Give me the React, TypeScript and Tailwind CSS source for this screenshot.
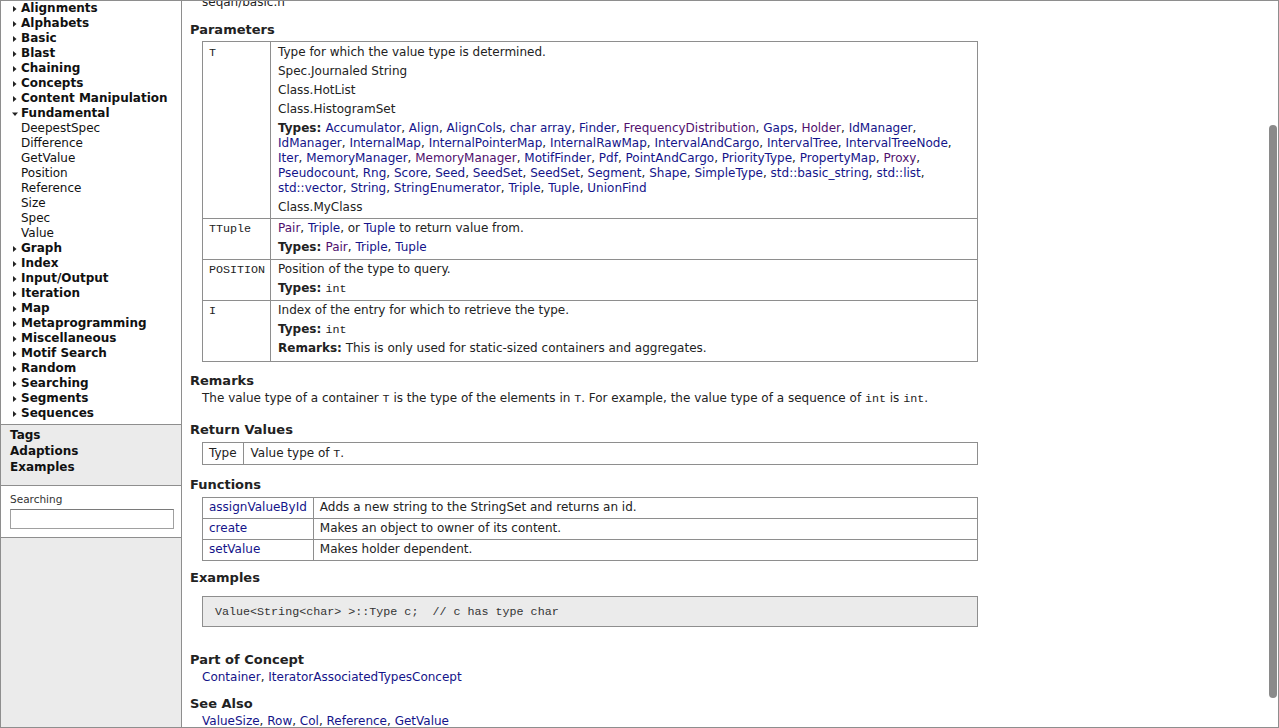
import React from 'react';

const sans = { fontFamily: '"DejaVu Sans", Verdana, sans-serif' };

type Node = { label: string; open?: boolean; children?: string[] };

const tree: Node[] = [
  { label: 'Alignments' },
  { label: 'Alphabets' },
  { label: 'Basic' },
  { label: 'Blast' },
  { label: 'Chaining' },
  { label: 'Concepts' },
  { label: 'Content Manipulation' },
  {
    label: 'Fundamental',
    open: true,
    children: ['DeepestSpec', 'Difference', 'GetValue', 'Position', 'Reference', 'Size', 'Spec', 'Value'],
  },
  { label: 'Graph' },
  { label: 'Index' },
  { label: 'Input/Output' },
  { label: 'Iteration' },
  { label: 'Map' },
  { label: 'Metaprogramming' },
  { label: 'Miscellaneous' },
  { label: 'Motif Search' },
  { label: 'Random' },
  { label: 'Searching' },
  { label: 'Segments' },
  { label: 'Sequences' },
];

// visited links render purple
const typeLines: [string, boolean?][][] = [
  [['Accumulator'], ['Align'], ['AlignCols'], ['char array'], ['Finder'], ['FrequencyDistribution', true], ['Gaps'], ['Holder', true], ['IdManager']],
  [['IdManager'], ['InternalMap'], ['InternalPointerMap'], ['InternalRawMap'], ['IntervalAndCargo'], ['IntervalTree'], ['IntervalTreeNode']],
  [['Iter'], ['MemoryManager'], ['MemoryManager', true], ['MotifFinder'], ['Pdf'], ['PointAndCargo'], ['PriorityType'], ['PropertyMap'], ['Proxy', true]],
  [['Pseudocount'], ['Rng'], ['Score'], ['Seed'], ['SeedSet'], ['SeedSet'], ['Segment'], ['Shape'], ['SimpleType'], ['std::basic_string'], ['std::list']],
  [['std::vector'], ['String'], ['StringEnumerator'], ['Triple'], ['Tuple'], ['UnionFind']],
];

function A({ children, visited }: { children: React.ReactNode; visited?: boolean }) {
  return <span className={visited ? 'text-[#50106e]' : 'text-[#14148a]'}>{children}</span>;
}

function Mono({ children }: { children: React.ReactNode }) {
  return (
    <span className="text-[11.7px] leading-none" style={{ fontFamily: '"Liberation Mono", "Courier New", monospace' }}>
      {children}
    </span>
  );
}

function Tri({ open }: { open?: boolean }) {
  if (open) {
    return (
      <svg width="8" height="6" viewBox="0 0 8 6" className="mr-[2px]">
        <path d="M1 1.5 L7 1.5 L4 5 Z" fill="#222" />
      </svg>
    );
  }
  return (
    <svg width="8" height="8" viewBox="0 0 8 8" className="mr-[2px]">
      <path d="M2 1 L5.5 4 L2 7 Z" fill="#222" />
    </svg>
  );
}

function Heading({ children, className = '' }: { children: React.ReactNode; className?: string }) {
  return <div className={`text-[13px] leading-[16px] font-bold text-[#222] ${className}`}>{children}</div>;
}

function Sidebar() {
  return (
    <div className="w-[181px] shrink-0 border-r border-[#8e8e8e] flex flex-col bg-[#ebebeb]">
      <div className="bg-white pb-[3px] border-b border-[#8e8e8e]">
        <div className="pl-[10px] text-[12px] leading-[15px] text-[#111]">
          {tree.map((n) => (
            <div key={n.label}>
              <div className="flex items-center font-bold">
                <Tri open={n.open} />
                <span>{n.label}</span>
              </div>
              {n.children?.map((c) => (
                <div key={c} className="pl-[10px]">
                  {c}
                </div>
              ))}
            </div>
          ))}
        </div>
      </div>
      <div className="pl-[9px] pt-[2px] pb-[10px] text-[12px] leading-[16px] font-bold text-[#111] border-b border-[#8e8e8e]">
        <div>Tags</div>
        <div>Adaptions</div>
        <div>Examples</div>
      </div>
      <div className="bg-white pl-[9px] pr-[8px] pt-[6px] pb-[8px] border-b border-[#8e8e8e]">
        <div className="text-[10.5px] leading-[14px] text-[#333]">Searching</div>
        <div className="mt-[3px] h-[20px] w-[164px] border border-[#a0a0a0] border-t-[#7a7a7a] bg-white" />
      </div>
      <div className="flex-1" />
    </div>
  );
}

function Main() {
  const cellName = 'border border-[#8e8e8e] align-top pl-[6px] pr-[4px] pt-[2px] pb-[4px]';
  const cellDesc = 'border border-[#8e8e8e] align-top pl-[7px] pr-[6px] pt-[2px] pb-[4px]';
  return (
    <div className="flex-1 relative overflow-hidden pl-[8px] text-[12px] leading-[15px] text-[#222]">
      <div className="-mt-[6px] pl-[12px]">seqan/basic.h</div>

      <Heading className="mt-[12px]">Parameters</Heading>
      <table className="mt-[3px] ml-[12px] w-[776px] border-collapse">
        <tbody>
          <tr>
            <td className="border border-[#8e8e8e] align-top pl-[6px] pr-[4px] pt-[3px] pb-[3px] w-[68px]">
              <Mono>T</Mono>
            </td>
            <td className="border border-[#8e8e8e] align-top pl-[7px] pr-[6px] pt-[3px] pb-[3px]">
              <div className="space-y-[4px]">
                <div>Type for which the value type is determined.</div>
                <div>Spec.Journaled String</div>
                <div>Class.HotList</div>
                <div>Class.HistogramSet</div>
                <div>
                  {typeLines.map((line, li) => (
                    <div key={li} className="whitespace-nowrap">
                      {li === 0 && <b>Types: </b>}
                      {line.map(([name, v], i) => (
                        <React.Fragment key={i}>
                          <A visited={v}>{name}</A>
                          {li === typeLines.length - 1 && i === line.length - 1 ? '' : i === line.length - 1 ? ',' : ', '}
                        </React.Fragment>
                      ))}
                    </div>
                  ))}
                </div>
                <div>Class.MyClass</div>
              </div>
            </td>
          </tr>
          <tr>
            <td className={cellName}>
              <Mono>TTuple</Mono>
            </td>
            <td className={cellDesc}>
              <div className="space-y-[4px]">
                <div>
                  <A visited>Pair</A>, <A>Triple</A>, or <A>Tuple</A> to return value from.
                </div>
                <div>
                  <b>Types: </b>
                  <A visited>Pair</A>, <A>Triple</A>, <A>Tuple</A>
                </div>
              </div>
            </td>
          </tr>
          <tr>
            <td className={cellName}>
              <Mono>POSITION</Mono>
            </td>
            <td className={cellDesc}>
              <div className="space-y-[4px]">
                <div>Position of the type to query.</div>
                <div>
                  <b>Types: </b>
                  <Mono>int</Mono>
                </div>
              </div>
            </td>
          </tr>
          <tr>
            <td className={cellName}>
              <Mono>I</Mono>
            </td>
            <td className={`${cellDesc} pb-[5px]`}>
              <div className="space-y-[4px]">
                <div>Index of the entry for which to retrieve the type.</div>
                <div>
                  <b>Types: </b>
                  <Mono>int</Mono>
                </div>
                <div>
                  <b>Remarks:</b> This is only used for static-sized containers and aggregates.
                </div>
              </div>
            </td>
          </tr>
        </tbody>
      </table>

      <Heading className="mt-[11px]">Remarks</Heading>
      <div className="mt-[2px] pl-[12px]">
        The value type of a container <Mono>T</Mono> is the type of the elements in <Mono>T</Mono>. For example, the value
        type of a sequence of <Mono>int</Mono> is <Mono>int</Mono>.
      </div>

      <Heading className="mt-[16px]">Return Values</Heading>
      <table className="mt-[4px] ml-[12px] w-[776px] border-collapse">
        <tbody>
          <tr>
            <td className="border border-[#8e8e8e] px-[6px] py-[3px] w-[40px]">Type</td>
            <td className="border border-[#8e8e8e] px-[7px] py-[3px]">
              Value type of <Mono>T</Mono>.
            </td>
          </tr>
        </tbody>
      </table>

      <Heading className="mt-[12px]">Functions</Heading>
      <table className="mt-[4px] ml-[12px] w-[776px] border-collapse">
        <tbody>
          {[
            ['assignValueById', 'Adds a new string to the StringSet and returns an id.'],
            ['create', 'Makes an object to owner of its content.'],
            ['setValue', 'Makes holder dependent.'],
          ].map(([f, d]) => (
            <tr key={f}>
              <td className="border border-[#8e8e8e] px-[6px] pt-[2px] pb-[3px] w-[110px] whitespace-nowrap">
                <A>{f}</A>
              </td>
              <td className="border border-[#8e8e8e] px-[6px] pt-[2px] pb-[3px]">{d}</td>
            </tr>
          ))}
        </tbody>
      </table>

      <Heading className="mt-[9px]">Examples</Heading>
      <div className="mt-[10px] ml-[12px] w-[776px] border border-[#8e8e8e] bg-[#ebebeb] pl-[12px] py-[7px] whitespace-pre text-[#333]">
        <Mono>{'Value<String<char> >::Type c;  // c has type char'}</Mono>
      </div>

      <Heading className="mt-[25px]">Part of Concept</Heading>
      <div className="mt-[2px] pl-[12px]">
        <A>Container</A>, <A>IteratorAssociatedTypesConcept</A>
      </div>

      <Heading className="mt-[11px]">See Also</Heading>
      <div className="mt-[2px] pl-[12px]">
        <A>ValueSize</A>, <A>Row</A>, <A>Col</A>, <A>Reference</A>, <A>GetValue</A>
      </div>

      {/* overlay scrollbar */}
      <div className="absolute right-[1px] top-[124px] w-[8px] h-[573px] rounded-full bg-[#8a8a8a]" />
    </div>
  );
}

export default function App() {
  return (
    <div className="w-[1279px] h-[728px] overflow-hidden bg-white" style={sans}>
      <div className="h-full border border-[#8e8e8e] flex overflow-hidden">
        <Sidebar />
        <Main />
      </div>
    </div>
  );
}
